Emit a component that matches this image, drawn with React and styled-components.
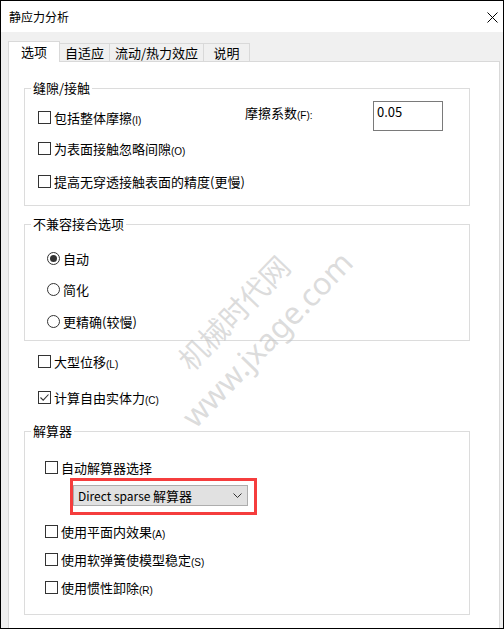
import React from "react";
import styled, { createGlobalStyle } from "styled-components";

const GlobalStyle = createGlobalStyle`
  html, body { margin: 0; padding: 0; background: #fff; }
  * { box-sizing: border-box; }
`;

const FONT = `"Noto Sans CJK SC", "Noto Sans", sans-serif`;

const Window = styled.div`
  position: relative;
  width: 504px;
  height: 629px;
  border: 1px solid #000;
  background: #f0f0f0;
  display: flex;
  flex-direction: column;
  overflow: hidden;
  font-family: ${FONT};
  font-size: 13px;
  color: #000;
`;

const TitleBar = styled.div`
  height: 31px;
  flex: none;
  background: #fff;
  display: flex;
  align-items: center;
  justify-content: space-between;
  padding: 1px 5px 0 8px;
`;

const Title = styled.span`
  font-size: 12px;
  line-height: 16px;
`;

const Body = styled.div`
  flex: 1;
  display: flex;
  flex-direction: column;
  padding: 9px 3px 0 7px;
  min-height: 0;
`;

const TabRow = styled.div`
  display: flex;
  align-items: flex-end;
  height: 20px;
  flex: none;
`;

const Tab = styled.div`
  position: relative;
  width: ${(p) => p.$w}px;
  height: ${(p) => (p.$active ? 21 : 18)}px;
  margin-bottom: ${(p) => (p.$active ? -1 : 0)}px;
  z-index: ${(p) => (p.$active ? 1 : 0)};
  background: ${(p) => (p.$active ? "#fff" : "#f0f0f0")};
  border-top: 1px solid #d9d9d9;
  border-right: 1px solid #d9d9d9;
  border-left: ${(p) => (p.$active ? "1px solid #d9d9d9" : "none")};
  display: flex;
  align-items: center;
  justify-content: center;
  line-height: 16px;
  padding-bottom: ${(p) => (p.$active ? 1 : 0)}px;
`;

const Panel = styled.div`
  flex: 1;
  background: #fff;
  border: 1px solid #d9d9d9;
  border-bottom: none;
  display: flex;
  flex-direction: column;
  align-items: flex-start;
`;

const Group = styled.fieldset`
  margin: ${(p) => p.$mt}px 0 0 15px;
  width: 446px;
  min-width: 0;
  padding: 0;
  border: 1px solid #dcdcdc;
`;

const Legend = styled.legend`
  margin-left: 6px;
  padding: 0 2px;
  line-height: 16px;
`;

const GroupBody = styled.div`
  display: flex;
  flex-direction: column;
  align-items: flex-start;
  gap: ${(p) => p.$gap || 0}px;
  padding: ${(p) => p.$pt}px 0 ${(p) => p.$pb}px ${(p) => p.$pl}px;
`;

const ContactGrid = styled.div`
  display: grid;
  grid-template-columns: 207px 128px 70px;
  align-items: start;
  padding: 0 0 14px 13px;
`;

const Cell = styled.div`
  margin-top: ${(p) => p.$mt || 0}px;
  grid-column: ${(p) => p.$col || "auto"};
`;

const FieldLabel = styled.div`
  margin-top: 7px;
  line-height: 20px;
  white-space: nowrap;
`;

const TextField = styled.div`
  margin-top: 5px;
  width: 70px;
  height: 30px;
  border: 1px solid #7a7a7a;
  padding: 2px 3px;
  line-height: 16px;
`;

const Item = styled.label`
  display: flex;
  align-items: center;
  height: 20px;
  gap: 3px;
  white-space: nowrap;
  margin-top: ${(p) => p.$mt || 0}px;
  margin-left: ${(p) => p.$ml || 0}px;
`;

const Box = styled.span`
  width: 13px;
  height: 13px;
  flex: none;
  border: 1px solid #333;
  background: #fff;
  display: flex;
  align-items: center;
  justify-content: center;
`;

const RadioCircle = styled.span`
  width: 13px;
  height: 13px;
  flex: none;
  border: 1px solid #333;
  border-radius: 50%;
  background: #fff;
  display: flex;
  align-items: center;
  justify-content: center;
  &::after {
    content: "";
    display: ${(p) => (p.$checked ? "block" : "none")};
    width: 7px;
    height: 7px;
    border-radius: 50%;
    background: #333;
  }
`;

const Key = styled.span`
  font-family: "Liberation Sans", Arial, sans-serif;
  font-size: 10px;
  position: relative;
  top: 1px;
`;

const RedFrame = styled.div`
  margin: 1px 0 0 25px;
  border: 3px solid #f53d3d;
  padding: 4px 6px 6px 0;
`;

const Select = styled.div`
  width: 175px;
  height: 21px;
  background: #e1e1e1;
  border: 1px solid #adadad;
  display: flex;
  align-items: center;
  justify-content: space-between;
  padding: 0 5px 0 4px;
  line-height: 16px;
  white-space: nowrap;
`;

const Latin = styled.span`
  font-size: 12px;
`;

const Watermark = styled.span`
  position: absolute;
  left: ${(p) => p.$x}px;
  top: ${(p) => p.$y}px;
  transform: translate(-50%, -50%) rotate(-46deg);
  font-family: ${(p) => p.$font};
  font-size: ${(p) => p.$size}px;
  color: rgba(190, 190, 190, 0.55);
  white-space: nowrap;
  pointer-events: none;
  line-height: 1;
`;

const Check = ({ checked, children, mt, ml }) => (
  <Item $mt={mt} $ml={ml}>
    <Box>
      {checked && (
        <svg width="11" height="11" viewBox="0 0 11 11">
          <path d="M1.5 5.5 L4.2 8.2 L9.5 2.5" fill="none" stroke="#333" strokeWidth="1.1" />
        </svg>
      )}
    </Box>
    <span>{children}</span>
  </Item>
);

const Radio = ({ checked, children }) => (
  <Item>
    <RadioCircle $checked={checked} />
    <span>{children}</span>
  </Item>
);

export default function App() {
  return (
    <>
      <GlobalStyle />
      <Window>
        <TitleBar>
          <Title>静应力分析</Title>
          <svg width="11" height="11" viewBox="0 0 11 11">
            <path d="M0.5 0.5 L10.5 10.5 M10.5 0.5 L0.5 10.5" stroke="#000" strokeWidth="1" />
          </svg>
        </TitleBar>
        <Body>
          <TabRow>
            <Tab $active $w={52}>选项</Tab>
            <Tab $w={50}>自适应</Tab>
            <Tab $w={94}>流动/热力效应</Tab>
            <Tab $w={46}>说明</Tab>
          </TabRow>
          <Panel>
            <Group $mt={18}>
              <Legend>缝隙/接触</Legend>
              <ContactGrid>
                <Cell $mt={11}>
                  <Check>包括整体摩擦<Key>(I)</Key></Check>
                </Cell>
                <FieldLabel>摩擦系数<Key>(F):</Key></FieldLabel>
                <TextField>0.05</TextField>
                <Cell $mt={7} $col="1 / 4">
                  <Check>为表面接触忽略间隙<Key>(O)</Key></Check>
                </Cell>
                <Cell $mt={13} $col="1 / 4">
                  <Check>提高无穿透接触表面的精度(更慢)</Check>
                </Cell>
              </ContactGrid>
            </Group>

            <Group $mt={10}>
              <Legend>不兼容接合选项</Legend>
              <GroupBody $pt={16} $pb={9} $pl={22} $gap={11.5}>
                <Radio checked>自动</Radio>
                <Radio>简化</Radio>
                <Radio>更精确(较慢)</Radio>
              </GroupBody>
            </Group>

            <Check mt={10} ml={29}>大型位移<Key>(L)</Key></Check>
            <Check mt={16} ml={29} checked>计算自由实体力<Key>(C)</Key></Check>

            <Group $mt={16}>
              <Legend>解算器</Legend>
              <GroupBody $pt={18} $pb={17} $pl={20}>
                <Check>自动解算器选择</Check>
                <RedFrame>
                  <Select>
                    <span><Latin>Direct sparse </Latin>解算器</span>
                    <svg width="9" height="5" viewBox="0 0 9 5">
                      <path d="M0.5 0.5 L4.5 4.5 L8.5 0.5" fill="none" stroke="#333" strokeWidth="1" />
                    </svg>
                  </Select>
                </RedFrame>
                <Check mt={6}>使用平面内效果<Key>(A)</Key></Check>
                <Check mt={8}>使用软弹簧使模型稳定<Key>(S)</Key></Check>
                <Check mt={8}>使用惯性卸除<Key>(R)</Key></Check>
              </GroupBody>
            </Group>
          </Panel>
        </Body>
        <Watermark $x={232} $y={311} $size={29} $font={FONT}>机械时代网</Watermark>
        <Watermark $x={266} $y={338} $size={31} $font={`"Noto Sans", sans-serif`}>www.jxage.com</Watermark>
      </Window>
    </>
  );
}
